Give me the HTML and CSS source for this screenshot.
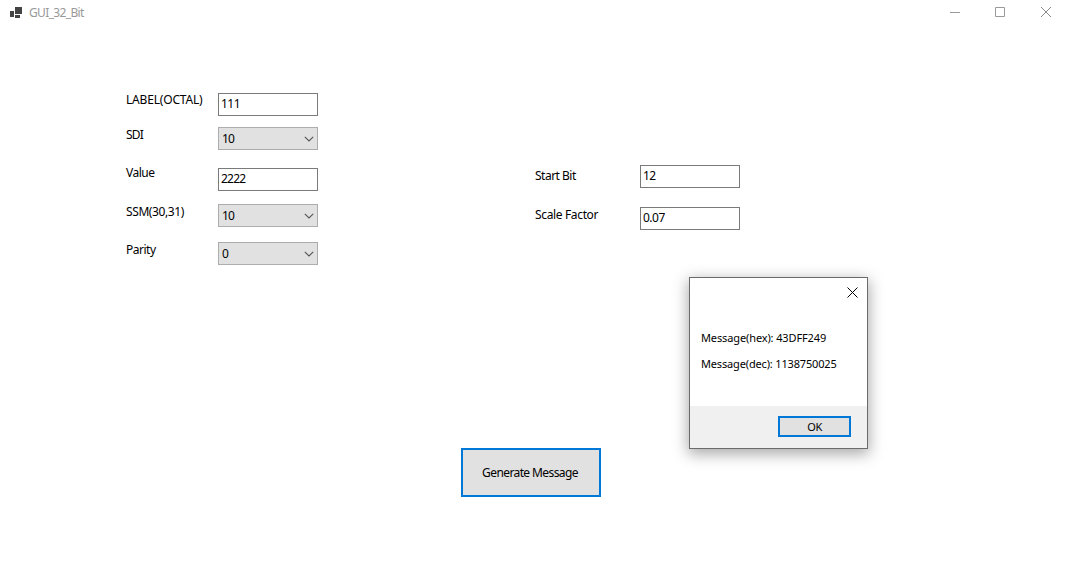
FILE: index.html
```html
<!DOCTYPE html>
<html lang="en">
<head>
<meta charset="utf-8">
<title>GUI_32_Bit</title>
<link rel="stylesheet" href="styles.css">
</head>
<body>
<div class="window">
  <header class="titlebar">
    <svg class="app-icon" width="12" height="12" viewBox="0 0 12 12" shape-rendering="crispEdges"><path d="M5 0h7v7H5zM0 4h4v6H0zM5 8h5v3H5z" fill="#444"/></svg>
    <span class="title">GUI_32_Bit</span>
    <svg class="control minimize" width="10" height="10" viewBox="0 0 10 10"><path d="M0 5.5h10" stroke="#999"/></svg>
    <svg class="control" width="10" height="10" viewBox="0 0 10 10"><path d="M.5.5h9v9h-9z" fill="none" stroke="#999"/></svg>
    <svg class="control" width="10" height="10" viewBox="0 0 10 10"><path d="M0 0l10 10M10 0L0 10" stroke="#8a8a8a"/></svg>
  </header>
  <main class="content">
    <section class="fields fields-left">
      <div class="row"><label class="up-1"><span class="t-label">LABEL(OCTAL)</span></label><div class="textbox">111</div></div>
      <div class="row gap-11"><label><span class="t-sdi">SDI</span></label><div class="combo"><span>10</span><svg width="10" height="6" viewBox="0 0 10 6"><path d="M.8.8L5 5 9.2.8" fill="none" stroke="#555" stroke-width="1.1"/></svg></div></div>
      <div class="row gap-18"><label class="up-3"><span class="t-value">Value</span></label><div class="textbox t-digits">2222</div></div>
      <div class="row gap-13"><label><span class="t-ssm">SSM(30,31)</span></label><div class="combo"><span>10</span><svg width="10" height="6" viewBox="0 0 10 6"><path d="M.8.8L5 5 9.2.8" fill="none" stroke="#555" stroke-width="1.1"/></svg></div></div>
      <div class="row gap-15"><label><span class="t-parity">Parity</span></label><div class="combo"><span>0</span><svg width="10" height="6" viewBox="0 0 10 6"><path d="M.8.8L5 5 9.2.8" fill="none" stroke="#555" stroke-width="1.1"/></svg></div></div>
    </section>
    <section class="fields fields-right">
      <div class="row"><label class="down-3"><span class="t-start">Start Bit</span></label><div class="textbox">12</div></div>
      <div class="row gap-19"><label><span class="t-scale">Scale Factor</span></label><div class="textbox">0.07</div></div>
    </section>
  </main>
  <button class="generate"><span class="t-generate">Generate Message</span></button>
</div>
<div class="dialog">
  <div class="dialog-head"><svg width="11" height="11" viewBox="0 0 11 11"><path d="M.5.5l10 10M10.5.5l-10 10" stroke="#000"/></svg></div>
  <div class="dialog-body">
    <p><span class="t-hex">Message(hex): 43DFF249</span></p>
    <p><span class="t-dec">Message(dec): 1138750025</span></p>
  </div>
  <div class="dialog-foot"><button class="ok">OK</button></div>
</div>
</body>
</html>
```
FILE: styles.css
```css
* { box-sizing: border-box; }
body {
  margin: 0;
  background: #fff;
  color: #000;
  font: 12px/16px "Noto Sans", "Open Sans", sans-serif;
  letter-spacing: -0.4px;
  white-space: nowrap;
  overflow: hidden;
}
button { font: inherit; letter-spacing: inherit; color: inherit; padding: 0; }
.window { height: 579px; display: flex; flex-direction: column; }
.titlebar { height: 25px; display: flex; align-items: center; padding: 0 18px 0 10px; color: #999; }
.app-icon { margin-right: 7px; }
.title { flex: 1; letter-spacing: -0.65px; }
.control { margin-bottom: 1px; }
.control + .control { margin-left: 36px; }
.minimize { margin-right: -1px; }
.content { display: flex; height: 423px; padding-left: 126px; }
.fields-left { padding-top: 68px; width: 409px; }
.fields-right { padding-top: 140px; }
.row { display: grid; grid-template-columns: 92px 100px; height: 23px; }
.fields-right .row { grid-template-columns: 105px 100px; }
.gap-11 { margin-top: 11px; }
.gap-13 { margin-top: 13px; }
.gap-15 { margin-top: 15px; }
.gap-18 { margin-top: 18px; }
.gap-19 { margin-top: 19px; }
.up-1 { margin-top: -1px; }
.up-3 { margin-top: -3px; }
.down-3 { margin-top: 3px; }
.t-label { letter-spacing: -0.18px; }
.t-sdi { letter-spacing: -0.8px; }
.t-value, .t-parity { letter-spacing: -0.5px; }
.t-start { letter-spacing: -0.5px; }
.t-scale { letter-spacing: -0.35px; }
.t-generate { letter-spacing: -0.6px; }
.t-hex { letter-spacing: -0.12px; }
.t-dec { letter-spacing: -0.16px; }
.textbox { height: 23px; border: 1px solid #7a7a7a; padding: 2px; background: #fff; letter-spacing: -0.5px; }
.t-digits { letter-spacing: -0.8px; }
.combo {
  height: 23px; border: 1px solid #adadad; background: #e1e1e1;
  display: flex; align-items: center; justify-content: space-between; padding: 1px 3px 0;
  letter-spacing: -0.8px;
}
.generate { width: 140px; height: 49px; margin-left: 461px; padding-right: 2px; border: 2px solid #0078d7; background: #e1e1e1; }
.dialog {
  position: absolute; left: 689px; top: 277px; width: 179px; height: 172px;
  display: flex; flex-direction: column;
  border: 1px solid #6b6b6b; background: #fff;
  box-shadow: 0 4px 14px 1px rgba(0, 0, 0, .34);
  font-size: 11px;
}
.dialog-head { display: flex; justify-content: flex-end; padding: 9px 9px 0 0; height: 52px; }
.dialog-body { flex: 1; padding-left: 11px; }
.dialog-body p { margin: 0 0 10px; }
.dialog-foot { height: 42px; background: #f0f0f0; display: flex; justify-content: flex-end; padding: 10px 16px; }
.ok { width: 73px; height: 21px; border: 2px solid #0078d7; background: #e1e1e1; line-height: 17px; }
```
